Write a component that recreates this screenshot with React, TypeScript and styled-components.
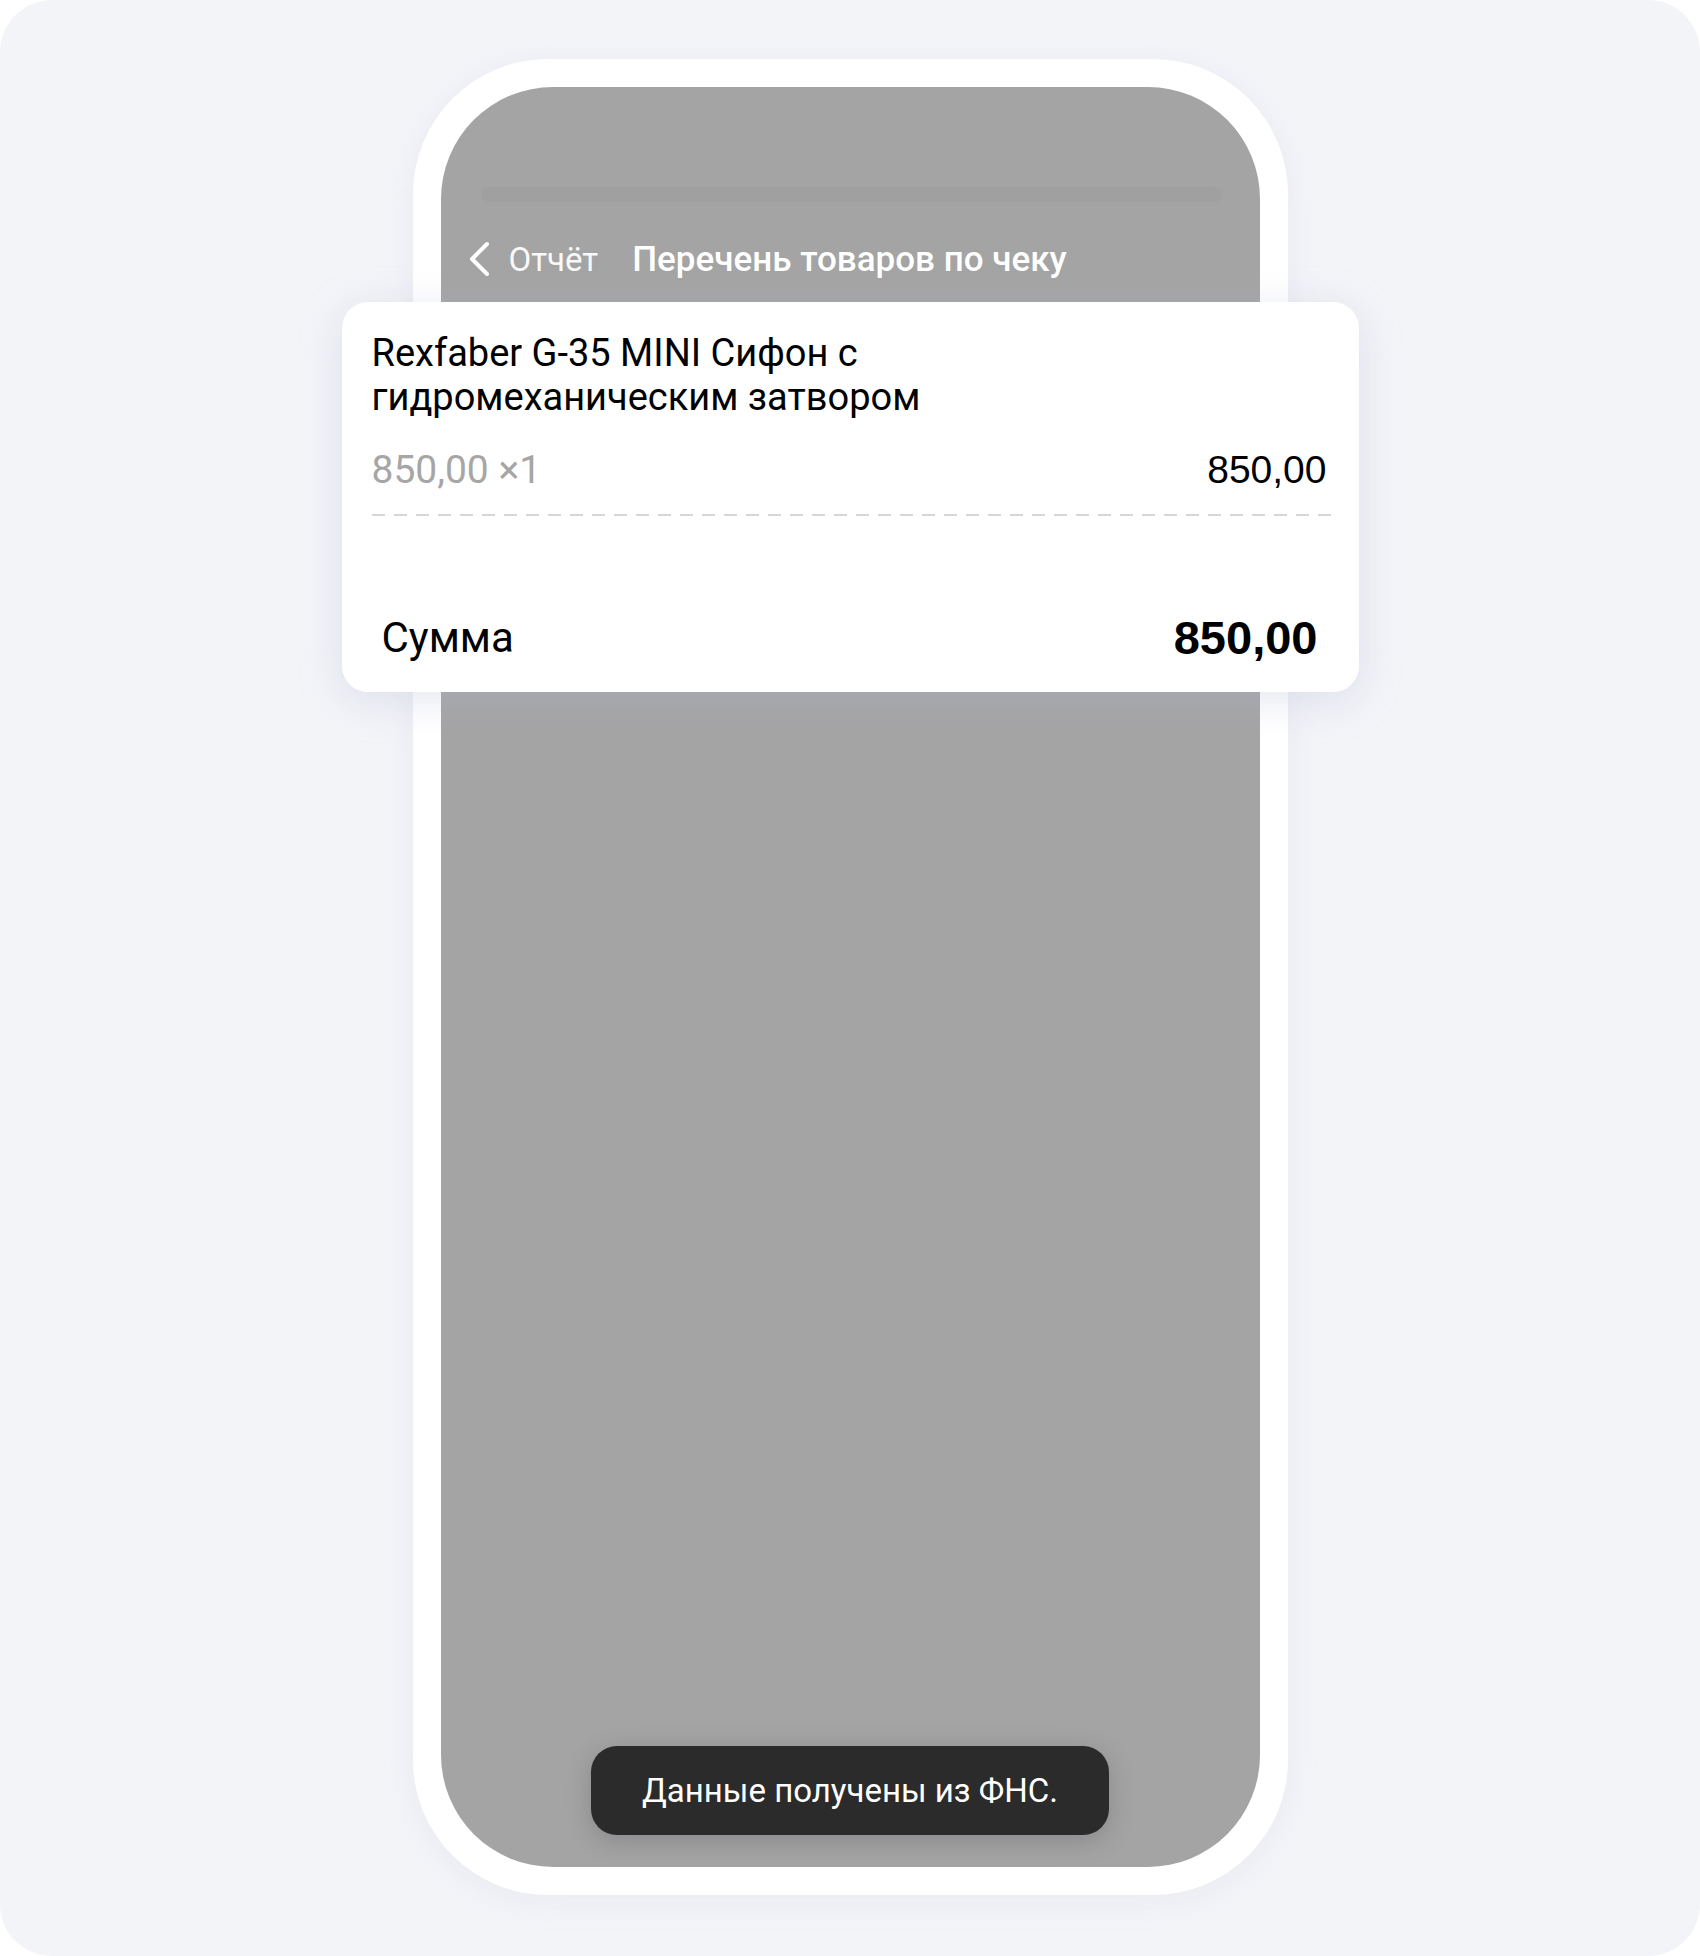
import React from "react";
import styled, { createGlobalStyle } from "styled-components";

const GlobalStyle = createGlobalStyle`
  html, body {
    margin: 0;
    padding: 0;
    background: #ffffff;
  }
  body {
    font-family: Roboto, "Noto Sans", sans-serif;
    -webkit-font-smoothing: antialiased;
  }
`;

const Page = styled.div`
  width: 1700px;
  height: 1956px;
  background: #f3f4f8;
  border-radius: 52px;
  display: flex;
  justify-content: center;
  padding-top: 59px;
  box-sizing: border-box;
`;

const Phone = styled.div`
  width: 875px;
  height: 1836px;
  box-sizing: border-box;
  padding: 28px;
  background: #ffffff;
  border-radius: 135px;
  box-shadow: 0 6px 30px rgba(190, 195, 215, 0.18);
`;

const Screen = styled.div`
  height: 100%;
  background: #a4a4a4;
  border-radius: 112px;
  display: flex;
  flex-direction: column;
`;

const StatusBar = styled.div`
  margin: 100px 38px 0 40px;
  height: 15px;
  border-radius: 8px;
  background: #a0a0a0;
`;

const NavBar = styled.div`
  height: 100px;
  box-sizing: border-box;
  padding: 14px 0 0 27px;
  display: flex;
  align-items: center;
  color: #ffffff;
`;

const BackButton = styled.div`
  display: flex;
  align-items: center;
  gap: 19px;
  margin-right: 34px;
`;

const BackLabel = styled.span`
  font-size: 33px;
  font-weight: 400;
  color: rgba(255, 255, 255, 0.95);
`;

const NavTitle = styled.span`
  font-size: 35px;
  font-weight: 500;
`;

const Sheet = styled.div`
  margin: 0 -99px;
  background: #ffffff;
  border-radius: 26px;
  padding: 29px 25px 30px 30px;
  box-shadow: 0 8px 40px rgba(180, 186, 215, 0.35);
  color: #000000;
`;

const ItemTitle = styled.div`
  font-size: 38px;
  line-height: 44px;
  font-weight: 400;
`;

const PriceRow = styled.div`
  margin-top: 29px;
  margin-right: 7px;
  height: 44px;
  display: flex;
  align-items: center;
  justify-content: space-between;
`;

const UnitPrice = styled.span`
  font-size: 39px;
  color: #a6a6a6;
`;

const LinePrice = styled.span`
  font-family: "Liberation Sans", Arial, sans-serif;
  font-size: 39px;
`;

const Divider = styled.div`
  margin-top: 22px;
  height: 2px;
  background: repeating-linear-gradient(
    to right,
    #d6d6d6 0 13px,
    transparent 13px 22px
  );
`;

const SumRow = styled.div`
  margin-top: 96px;
  height: 50px;
  padding: 0 16px 0 10px;
  display: flex;
  align-items: center;
  justify-content: space-between;
`;

const SumLabel = styled.span`
  font-size: 42px;
`;

const SumValue = styled.span`
  font-family: "Liberation Sans", Arial, sans-serif;
  font-size: 47px;
  font-weight: 700;
`;

const Spacer = styled.div`
  flex: 1;
`;

const Toast = styled.div`
  align-self: center;
  margin-bottom: 32px;
  width: 518px;
  height: 89px;
  box-sizing: border-box;
  border-radius: 26px;
  background: #2b2b2b;
  color: #ffffff;
  font-size: 33px;
  display: flex;
  align-items: center;
  justify-content: center;
  box-shadow: 0 6px 24px rgba(60, 60, 70, 0.25);
`;

const Chevron = () => (
  <svg width="22" height="36" viewBox="0 0 22 36" fill="none">
    <polyline
      points="19,3 4,18 19,33"
      stroke="#ffffff"
      strokeWidth="4"
      strokeLinecap="round"
      strokeLinejoin="round"
    />
  </svg>
);

export default function App() {
  return (
    <>
      <GlobalStyle />
      <Page>
        <Phone>
          <Screen>
            <StatusBar />
            <NavBar>
              <BackButton>
                <Chevron />
                <BackLabel>Отчёт</BackLabel>
              </BackButton>
              <NavTitle>Перечень товаров по чеку</NavTitle>
            </NavBar>
            <Sheet>
              <ItemTitle>
                Rexfaber G-35 MINI Сифон с<br />
                гидромеханическим затвором
              </ItemTitle>
              <PriceRow>
                <UnitPrice>850,00 ×1</UnitPrice>
                <LinePrice>850,00</LinePrice>
              </PriceRow>
              <Divider />
              <SumRow>
                <SumLabel>Сумма</SumLabel>
                <SumValue>850,00</SumValue>
              </SumRow>
            </Sheet>
            <Spacer />
            <Toast>Данные получены из ФНС.</Toast>
          </Screen>
        </Phone>
      </Page>
    </>
  );
}
